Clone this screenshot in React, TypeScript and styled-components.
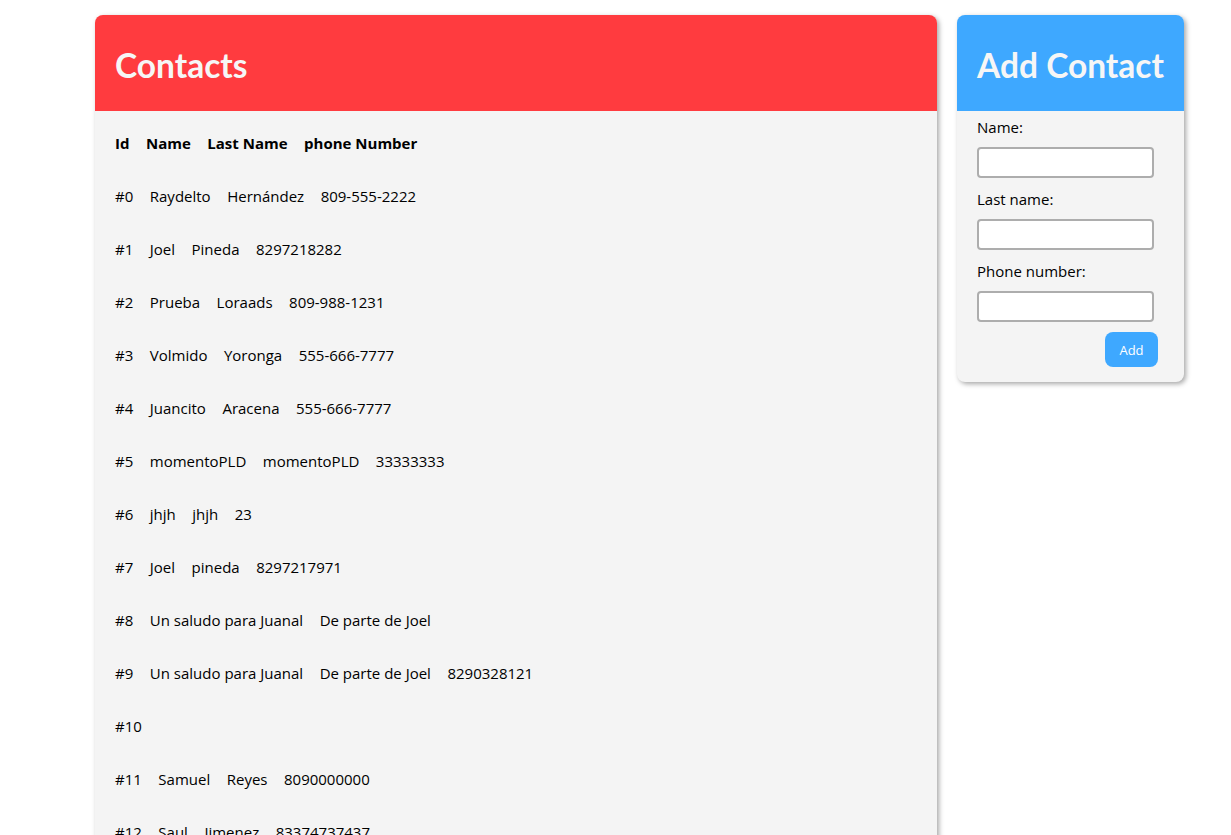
import React from "react";
import styled, { createGlobalStyle } from "styled-components";

const Global = createGlobalStyle`
  html, body { margin: 0; padding: 0; background: #ffffff; }
  body { font-family: "Open Sans", "Noto Sans", sans-serif; color: #000; }
`;

const Page = styled.div`
  display: flex;
  align-items: flex-start;
  gap: 20px;
  padding: 15px 0 0 95px;
`;

const Card = styled.section<{ $width: number }>`
  width: ${(p) => p.$width}px;
  background: #f4f4f4;
  border-radius: 8px;
  overflow: hidden;
  box-shadow: 2px 2px 5px rgba(0, 0, 0, 0.35);
`;

const CardHeader = styled.header<{ $color: string; $center?: boolean }>`
  box-sizing: border-box;
  height: 96px;
  background: ${(p) => p.$color};
  display: flex;
  align-items: center;
  justify-content: ${(p) => (p.$center ? "center" : "flex-start")};
  padding: 3px 20px 0;
`;

const Title = styled.h1`
  margin: 0;
  font-family: "Lato", "Open Sans", sans-serif;
  font-size: 33.5px;
  font-weight: 700;
  color: #f6f6f6;
  white-space: nowrap;
`;

const List = styled.div`
  display: flex;
  flex-direction: column;
  gap: 32px;
  padding: 22px 20px 40px;
`;

const Row = styled.div<{ $head?: boolean }>`
  display: flex;
  gap: 16.5px;
  font-size: 15px;
  line-height: 21px;
  height: 21px;
  font-weight: ${(p) => (p.$head ? 700 : 400)};
`;

const Form = styled.form`
  display: flex;
  flex-direction: column;
  padding: 6px 20px 15px;
`;

const Label = styled.label`
  font-size: 15px;
  line-height: 20px;
  margin-bottom: 10px;
`;

const Input = styled.input`
  box-sizing: border-box;
  width: 177px;
  height: 31px;
  border: 2px solid #adadad;
  border-radius: 4px;
  background: #fff;
  margin-bottom: 11px;
  outline: none;
`;

const Actions = styled.div`
  display: flex;
  justify-content: flex-end;
  padding-right: 6px;
  margin-top: -1px;
`;

const Button = styled.button`
  width: 53px;
  height: 35px;
  border: none;
  border-radius: 8px;
  background: #3ea8ff;
  color: #fff;
  font-family: "Open Sans", sans-serif;
  font-size: 13px;
`;

const contacts: string[][] = [
  ["#0", "Raydelto", "Hernández", "809-555-2222"],
  ["#1", "Joel", "Pineda", "8297218282"],
  ["#2", "Prueba", "Loraads", "809-988-1231"],
  ["#3", "Volmido", "Yoronga", "555-666-7777"],
  ["#4", "Juancito", "Aracena", "555-666-7777"],
  ["#5", "momentoPLD", "momentoPLD", "33333333"],
  ["#6", "jhjh", "jhjh", "23"],
  ["#7", "Joel", "pineda", "8297217971"],
  ["#8", "Un saludo para Juanal", "De parte de Joel"],
  ["#9", "Un saludo para Juanal", "De parte de Joel", "8290328121"],
  ["#10"],
  ["#11", "Samuel", "Reyes", "8090000000"],
  ["#12", "Saul", "Jimenez", "83374737437"],
];

export default function App() {
  return (
    <>
      <Global />
      <Page>
        <Card $width={842}>
          <CardHeader $color="#ff3b3f">
            <Title>Contacts</Title>
          </CardHeader>
          <List>
            <Row $head>
              <span>Id</span>
              <span>Name</span>
              <span>Last Name</span>
              <span>phone Number</span>
            </Row>
            {contacts.map((c, i) => (
              <Row key={i}>
                {c.map((v, j) => (
                  <span key={j}>{v}</span>
                ))}
              </Row>
            ))}
          </List>
        </Card>
        <Card $width={227}>
          <CardHeader $color="#3ea8ff" $center>
            <Title>Add Contact</Title>
          </CardHeader>
          <Form onSubmit={(e) => e.preventDefault()}>
            <Label>Name:</Label>
            <Input />
            <Label>Last name:</Label>
            <Input />
            <Label>Phone number:</Label>
            <Input />
            <Actions>
              <Button type="submit">Add</Button>
            </Actions>
          </Form>
        </Card>
      </Page>
    </>
  );
}
